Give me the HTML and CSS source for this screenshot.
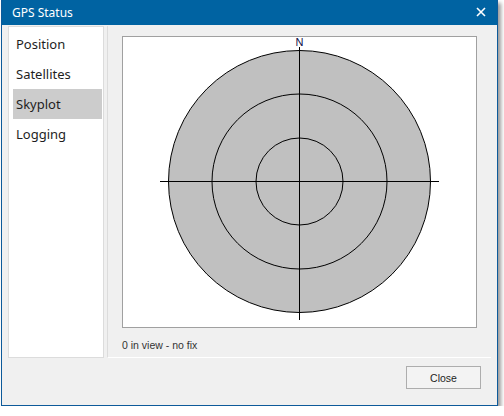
FILE: index.html
```html
<!DOCTYPE html>
<html lang="en">
  <head>
    <meta charset="UTF-8" />
    <title>GPS Status</title>
    <link rel="stylesheet" href="styles.css">
  </head>
  <body>
    <div class="window">
      <div class="titlebar">
        <span class="title">GPS Status</span>
        <span class="close-x">
          <svg width="10" height="10" viewBox="0 0 10 10">
            <path d="M1 1 L9 9 M9 1 L1 9" stroke="#fff" stroke-width="1.6" />
          </svg>
        </span>
      </div>

      <div class="main">
        <ul class="nav">
          <li>Position</li>
          <li>Satellites</li>
          <li class="active">Skyplot</li>
          <li>Logging</li>
        </ul>

        <div class="panel">
          <div class="plot">
            <svg width="353" height="290" viewBox="0 0 353 290">
              <circle cx="176.5" cy="144.5" r="131" fill="#c0c0c0" stroke="#000" stroke-width="1" />
              <circle cx="176.5" cy="144.5" r="87.5" fill="none" stroke="#000" stroke-width="1" />
              <circle cx="176.5" cy="144.5" r="43.5" fill="none" stroke="#000" stroke-width="1" />
              <line x1="37" y1="144.5" x2="316" y2="144.5" stroke="#000" stroke-width="1" />
              <line x1="176.5" y1="10" x2="176.5" y2="283" stroke="#000" stroke-width="1" />
              <text x="176.5" y="9" class="north" text-anchor="middle">N</text>
            </svg>
          </div>
          <div class="status">0 in view - no fix</div>
        </div>
      </div>

      <div class="footer">
        <button type="button">Close</button>
      </div>
    </div>
  </body>
</html>
```

FILE: styles.css
```css
body {
  margin: 0;
  padding: 0;
  background: #ffffff;
  font-family: "Noto Sans", sans-serif;
}
.window {
  margin-left: 1px;
  width: 495px;
  height: 405px;
  border: 1px solid #0d5a9a;
  border-top: none;
  background: #f0f0f0;
  box-shadow: 3px 3px 4px rgba(0, 0, 0, 0.4);
  display: flex;
  flex-direction: column;
}
.titlebar {
  height: 25px;
  background: #0063a2;
  color: #ffffff;
  display: flex;
  align-items: center;
  justify-content: space-between;
  padding: 0 11px 0 10px;
  font-size: 12px;
}
.close-x {
  display: flex;
  margin-top: -2px;
}
.main {
  display: flex;
  padding: 1px 6px 0 6px;
  height: 332px;
}
.nav {
  list-style: none;
  margin: 0;
  padding: 2px 1px 0 4px;
  width: 90px;
  background: #ffffff;
  border: 1px solid #dcdcdc;
  font-size: 13px;
  color: #1e1e1e;
}
.nav li {
  height: 30px;
  line-height: 30px;
  padding-left: 3px;
}
.nav li.active {
  background: #cccccc;
}
.panel {
  flex: 1;
  margin-left: 3px;
  border-left: 1px solid #dcdcdc;
  border-bottom: 1px solid #ffffff;
  padding: 10px 14px 0 14px;
}
.plot {
  width: 353px;
  height: 290px;
  background: #ffffff;
  border: 1px solid #a0a0a0;
}
.plot svg {
  display: block;
}
.north {
  font-family: "Liberation Sans", sans-serif;
  font-size: 11px;
  fill: #10104a;
}
.status {
  margin-top: 11px;
  font-family: "Liberation Sans", sans-serif;
  font-size: 10.5px;
  color: #333333;
}
.footer {
  display: flex;
  justify-content: flex-end;
  padding: 8px 16px 0 0;
}
button {
  width: 75px;
  height: 23px;
  background: #f3f3f3;
  border: 1px solid #adadad;
  font-family: "Liberation Sans", sans-serif;
  font-size: 10.5px;
  color: #1e1e1e;
  padding: 0;
}
```
